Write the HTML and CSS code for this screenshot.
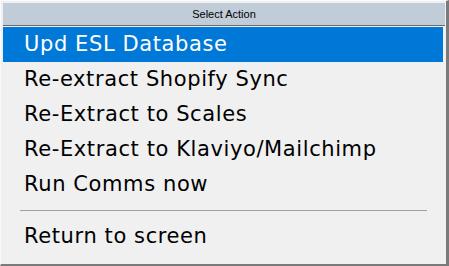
FILE: index.html
```html
<!DOCTYPE html>
<html lang="en">
<head>
    <meta charset="UTF-8">
    <title>Select Action</title>
    <link rel="stylesheet" href="styles.css">
</head>
<body>
    <div class="window">
        <div class="title">Select Action</div>
        <div class="menu">
            <a class="item active">Upd ESL Database</a>
            <a class="item">Re-extract Shopify Sync</a>
            <a class="item">Re-Extract to Scales</a>
            <a class="item">Re-Extract to Klaviyo/Mailchimp</a>
            <a class="item">Run Comms now</a>
            <div class="sep"></div>
            <a class="item">Return to screen</a>
        </div>
    </div>
</body>
</html>
```

FILE: styles.css
```css
body { margin: 0; background: #f0f0f0; }
.window { width: 449px; height: 266px; box-sizing: border-box; background: #f0f0f0; border-top: 1px solid #fafafa; border-left: 1px solid #fafafa; border-right: 3px solid #7a7a7a; border-bottom: 2px solid #7a7a7a; padding: 2px 0 0 2px; }
.title { height: 22px; margin-right: 1px; background: #c0ccd8; border-bottom: 1px solid #6a6a6a; font-family: "Liberation Sans", Arial, sans-serif; font-size: 11px; line-height: 22px; text-align: center; color: #000; }
.menu { padding-top: 1px; }
.item { display: block; height: 35px; margin-right: 3px; padding-left: 21px; font-family: "DejaVu Sans", sans-serif; font-size: 21px; letter-spacing: 0.6px; line-height: 35px; color: #000; }
.item.active { background: #0078d7; color: #fff; }
.sep { height: 1px; background: #a0a0a0; margin: 8px 19px 8px 17px; }
```
